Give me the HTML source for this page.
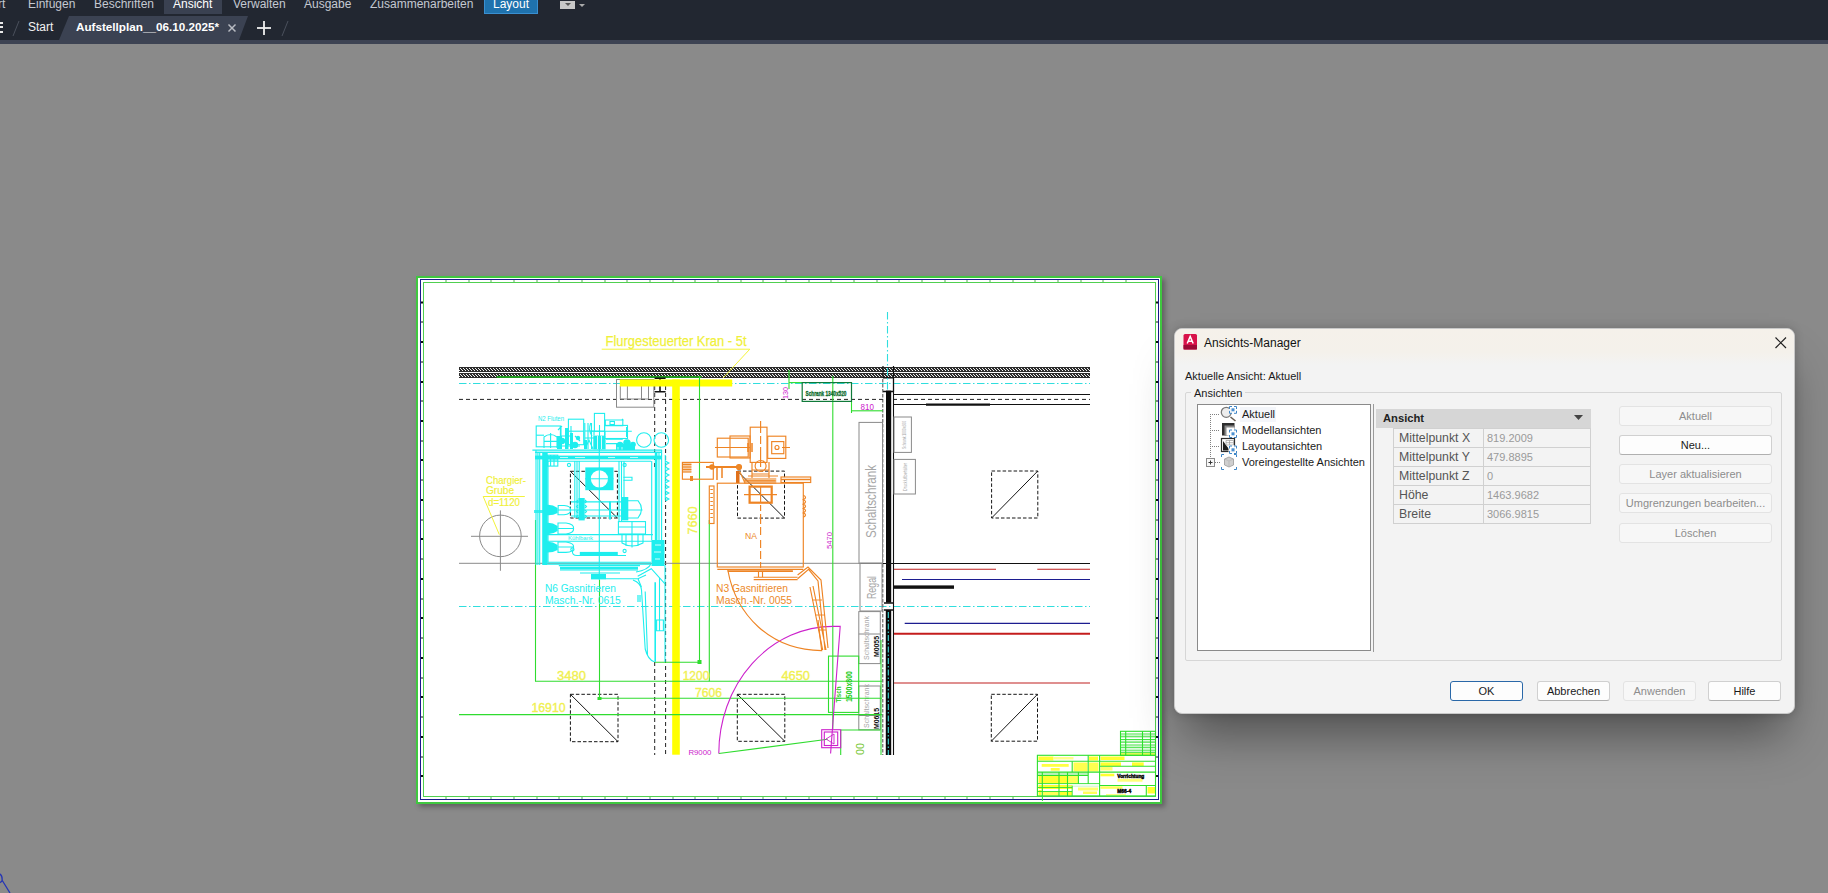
<!DOCTYPE html>
<html><head><meta charset="utf-8">
<style>
*{margin:0;padding:0;box-sizing:border-box}
html,body{width:1828px;height:893px;overflow:hidden;background:#8a8a8a;font-family:"Liberation Sans",sans-serif;position:relative}
.abs{position:absolute}
#top{position:absolute;left:0;top:0;width:1828px;height:44px;background:#222731}
#strip{position:absolute;left:0;top:40px;width:1828px;height:4px;background:#3d4353}
.mt{position:absolute;top:-3px;font-size:12px;color:#c5c9d1;white-space:nowrap;line-height:14px}
#dlg{position:absolute;left:1174px;top:328px;width:621px;height:386px;background:#f3f3f3;border-radius:8px;box-shadow:0 30px 45px -10px rgba(0,0,0,0.42),0 0 10px rgba(0,0,0,0.18);border:1px solid #c8c8c8;overflow:hidden}
.dt{position:absolute;font-size:11px;color:#1a1a1a;white-space:nowrap;line-height:14px}
.btn{position:absolute;height:20px;border:1px solid #e3e3e3;background:#f7f7f7;border-radius:3px;font-size:11px;color:#8d8d8d;text-align:center;line-height:18px;white-space:nowrap}
.btn.en{background:#fdfdfd;border-color:#d0d0d0;border-bottom-color:#b0b0b0;color:#1a1a1a}
</style></head><body>
<div id="top">
  <div class="mt" style="left:-2px">rt</div>
  <div class="mt" style="left:28px">Einfügen</div>
  <div class="mt" style="left:94px">Beschriften</div>
  <div class="abs" style="left:164px;top:0;width:58px;height:14px;background:#3a4151"></div>
  <div class="mt" style="left:173px;color:#fff">Ansicht</div>
  <div class="mt" style="left:233px">Verwalten</div>
  <div class="mt" style="left:304px">Ausgabe</div>
  <div class="mt" style="left:370px">Zusammenarbeiten</div>
  <div class="abs" style="left:484px;top:0;width:54px;height:14px;background:#1f72ad;border:1px solid #3a8fd0;border-top:none"></div>
  <div class="mt" style="left:493px;color:#fff">Layout</div>
  <div class="abs" style="left:560px;top:1px;width:15px;height:8px;background:#c8c8c8"></div>
  <div class="abs" style="left:565px;top:3px;width:0;height:0;border-left:3px solid transparent;border-right:3px solid transparent;border-top:3px solid #555"></div>
  <div class="abs" style="left:579px;top:4px;width:0;height:0;border-left:3px solid transparent;border-right:3px solid transparent;border-top:3px solid #aaa"></div>
  <!-- doc tabs row -->
  <svg class="abs" style="left:0;top:0" width="1828" height="44">
    <polygon points="59,40 69,16 248,16 239,40" fill="#3b4252"/>
    <line x1="13" y1="36" x2="19" y2="21" stroke="#4a505c" stroke-width="1"/>
    <line x1="282" y1="36" x2="288" y2="21" stroke="#4a505c" stroke-width="1"/>
    <rect x="0" y="22" width="3" height="2" fill="#e8e8e8"/>
    <rect x="0" y="26" width="3" height="2" fill="#e8e8e8"/>
    <rect x="0" y="31" width="3" height="2" fill="#e8e8e8"/>
    <line x1="228.5" y1="24.5" x2="235.5" y2="31.5" stroke="#b9bcc3" stroke-width="1.5"/>
    <line x1="235.5" y1="24.5" x2="228.5" y2="31.5" stroke="#b9bcc3" stroke-width="1.5"/>
    <line x1="257" y1="28" x2="271" y2="28" stroke="#f0f0f0" stroke-width="1.8"/>
    <line x1="264" y1="21" x2="264" y2="35" stroke="#f0f0f0" stroke-width="1.8"/>
  </svg>
  <div class="mt" style="left:28px;top:20px;color:#f2f2f2">Start</div>
  <div class="mt" style="left:76px;top:20px;color:#fff;font-weight:bold;font-size:11.7px">Aufstellplan__06.10.2025*</div>
</div>
<div id="strip"></div>

<svg class="abs" style="left:0;top:860px" width="20" height="33"><path d="M-3 13 Q3 14 2 21 Q-1 24 -4 22 M2 20 L10 33" stroke="#2535b5" stroke-width="1.3" fill="none"/></svg>
<!-- PAPER -->
<div class="abs" style="left:416px;top:276px;width:746px;height:528px;background:#fff;border:2px solid #3fc83f;box-shadow:3px 3px 5px rgba(0,0,0,0.3)"></div>
<div class="abs" style="left:420px;top:279px;width:739px;height:521px;border:1px solid #1a1a8c"></div>
<div class="abs" style="left:423px;top:282px;width:733px;height:515px;border:1px solid #50d050"></div>

<!-- DRAWING START -->
<svg class="abs" style="left:0;top:0" width="1828" height="893" viewBox="0 0 1828 893">
<defs>
<pattern id="hatch" x="0" y="367" width="6" height="6" patternUnits="userSpaceOnUse">
<rect width="6" height="6" fill="#2c2c2c"/>
<g fill="#f2f2f2" shape-rendering="crispEdges">
<rect x="1" y="1" width="1" height="1"/><rect x="2" y="2" width="1" height="1"/><rect x="3" y="3" width="1" height="1"/>
<rect x="4" y="1" width="1" height="1"/><rect x="5" y="2" width="1" height="1"/><rect x="0" y="3" width="1" height="1"/>
</g>
</pattern>
</defs>
<g shape-rendering="auto">
<!-- paper border ticks -->
<g stroke="#111" stroke-width="1">
<path d="M421 302.5h2 M421 342h2 M421 382h2 M421 421h2 M421 460h2 M421 500h2 M421 539h2 M421 579h2 M421 618h2 M421 658h2 M421 697h2 M421 737h2 M421 776h2" stroke-width="2"/>
<path d="M421 322h2 M421 362h2 M421 401h2 M421 441h2 M421 480h2 M421 520h2 M421 559h2 M421 599h2 M421 638h2 M421 678h2 M421 717h2 M421 757h2"/>
<path d="M1156 302.5h2 M1156 342h2 M1156 382h2 M1156 421h2 M1156 460h2 M1156 500h2 M1156 539h2 M1156 579h2 M1156 618h2 M1156 658h2 M1156 697h2 M1156 737h2 M1156 776h2" stroke-width="2"/>
<path d="M1156 322h2 M1156 362h2 M1156 401h2 M1156 441h2 M1156 480h2 M1156 520h2 M1156 559h2 M1156 599h2 M1156 638h2 M1156 678h2 M1156 717h2 M1156 757h2"/>
</g>
<g stroke="#2a9a2a" stroke-width="0.8">
<path d="M446 280v2 M469 280v2 M491 280v2 M514 280v2 M537 280v2 M559 280v2 M582 280v2 M605 280v2 M627 280v2 M650 280v2 M673 280v2 M695 280v2 M718 280v2 M741 280v2 M763 280v2 M786 280v2 M809 280v2 M831 280v2 M854 280v2 M877 280v2 M899 280v2 M922 280v2 M945 280v2 M967 280v2 M990 280v2 M1013 280v2 M1035 280v2 M1058 280v2 M1081 280v2 M1103 280v2 M1126 280v2"/>
<path d="M446 797v2 M469 797v2 M491 797v2 M514 797v2 M537 797v2 M559 797v2 M582 797v2 M605 797v2 M627 797v2 M650 797v2 M673 797v2 M695 797v2 M718 797v2 M741 797v2 M763 797v2 M786 797v2 M809 797v2 M831 797v2 M854 797v2 M877 797v2 M899 797v2 M922 797v2 M945 797v2 M967 797v2 M990 797v2 M1013 797v2"/>
</g>

<!-- wall hatch -->
<rect x="459" y="367" width="631" height="5" fill="url(#hatch)" shape-rendering="crispEdges"/>
<rect x="459" y="373" width="631" height="5" fill="url(#hatch)" shape-rendering="crispEdges"/>
<rect x="496.6" y="376" width="205" height="2" fill="#1f9a1f"/>
<path d="M883 366v12 M893.5 366v26" stroke="#111" stroke-width="1.2"/>
<path d="M883 377.8h10.5 M883 391.5h10.5" stroke="#111" stroke-width="1.3"/>

<!-- cyan dash-dot lines -->
<g stroke="#30dede" stroke-width="1.1" stroke-dasharray="7.5,2.5,1.5,2.5" fill="none">
<line x1="459" y1="383.5" x2="1090" y2="383.5"/>
<line x1="459" y1="606.5" x2="1090" y2="606.5"/>
<line x1="887.5" y1="312" x2="887.5" y2="390"/>
</g>

<!-- black dashed lines -->
<g stroke="#222" stroke-width="1" stroke-dasharray="4,3" fill="none">
<line x1="459" y1="399.4" x2="1090" y2="399.4"/>
<line x1="654.7" y1="386" x2="654.7" y2="470"/>
<line x1="654.7" y1="662" x2="654.7" y2="755"/>
<line x1="665.6" y1="386" x2="665.6" y2="755"/>
<line x1="882.8" y1="379" x2="882.8" y2="755" stroke="#3a3a3a" stroke-width="0.9" stroke-dasharray="3.5,1.5"/>
</g>

<!-- gray box near crane -->
<g stroke="#8a8a8a" stroke-width="1" fill="none">
<rect x="616.5" y="379.5" width="37.3" height="27.7"/>
<path d="M620.3 386v13 M627.4 386v13 M641.5 386v13 M648.5 386v13 M620.3 399h28"/>
</g>
<path d="M654.6 378.3h11 M660 378.3v13.5 M654.6 391.8h11" stroke="#111" stroke-width="1.6" fill="none"/>

<!-- crane label -->
<text x="605.5" y="346.4" font-family="Liberation Sans" font-size="15" fill="#f0f038" stroke="#f0f038" stroke-width="0.25" textLength="141" lengthAdjust="spacingAndGlyphs">Flurgesteuerter Kran - 5t</text>
<path d="M601.7 349.2H749.8L723 378" stroke="#f4f43a" stroke-width="1" fill="none"/>

<!-- yellow T -->
<rect x="619.8" y="379.5" width="112.4" height="7" fill="#ffff00"/>
<rect x="672.2" y="379.5" width="7.6" height="375.2" fill="#ffff00"/>
</g>
</svg>
<svg class="abs" style="left:0;top:0" width="1828" height="893" viewBox="0 0 1828 893">
<!-- wall -->
<rect x="886" y="390.6" width="5.2" height="212" fill="#0a0a0a"/>
<rect x="885.8" y="610" width="5.4" height="145" fill="#0a0a0a"/>
<line x1="888.3" y1="612" x2="888.3" y2="755" stroke="#40dede" stroke-width="1.1" stroke-dasharray="6,2,1.5,2"/>
<path d="M884 603h9 M884 610h9" stroke="#111" stroke-width="1.5"/>
<line x1="893.5" y1="377" x2="893.5" y2="755" stroke="#111" stroke-width="1.1"/>
<!-- right black lines -->
<g stroke="#111" fill="none">
<line x1="893.5" y1="394.5" x2="1090" y2="394.5" stroke-width="1.2"/>
<line x1="893.5" y1="404.5" x2="1090" y2="404.5" stroke-width="1.1"/>
<line x1="926" y1="404.6" x2="990" y2="404.6" stroke-width="2.2"/>
<line x1="860" y1="563.5" x2="1090" y2="563.5" stroke-width="1.2"/>
<rect x="894" y="585.4" width="60" height="3.4" fill="#111" stroke="none"/>
</g>
<!-- red / blue -->
<g fill="none">
<path d="M893.9 569.2H996 M1037.3 569.2H1090" stroke="#c02020" stroke-width="1.1"/>
<path d="M902 579.5H1090" stroke="#1c1c90" stroke-width="1.1"/>
<path d="M904.7 623.4H1090" stroke="#1c1c90" stroke-width="1.1"/>
<path d="M894 633.8H1090" stroke="#c41c1c" stroke-width="2"/>
<path d="M894 683H1090" stroke="#c02020" stroke-width="1.1"/>
</g>
<!-- dashed squares -->
<g stroke="#151515" stroke-width="1" fill="none">
<rect x="570.4" y="471.3" width="47" height="46.7" stroke-dasharray="3.5,2"/>
<line x1="570.4" y1="471.3" x2="617.4" y2="518"/>
<rect x="737.5" y="471.1" width="47" height="47" stroke-dasharray="3.5,2"/>
<line x1="737.5" y1="471.1" x2="784.5" y2="518.1"/>
<rect x="991.6" y="471" width="46.2" height="47" stroke-dasharray="3.5,2"/>
<line x1="991.6" y1="518" x2="1037.8" y2="471"/>
<rect x="570.4" y="694.3" width="47.6" height="47.4" stroke-dasharray="3.5,2"/>
<line x1="570.4" y1="694.3" x2="618" y2="741.7"/>
<rect x="737.3" y="694.3" width="47.5" height="47" stroke-dasharray="3.5,2"/>
<line x1="737.3" y1="694.3" x2="784.8" y2="741.3"/>
<rect x="991.3" y="694.3" width="46.2" height="46.9" stroke-dasharray="3.5,2"/>
<line x1="991.3" y1="741.2" x2="1037.5" y2="694.3"/>
</g>
<!-- gray lines & circle -->
<g stroke="#8a8a8a" stroke-width="1" fill="none">
<line x1="459" y1="563.3" x2="860" y2="563.3"/>
<circle cx="500.4" cy="535.9" r="20.8"/>
<line x1="471" y1="536.3" x2="528" y2="536.3"/>
<line x1="500.4" y1="510.4" x2="500.4" y2="570.8"/>
<rect x="859" y="422.4" width="23.5" height="141"/>
<rect x="860" y="563" width="22" height="48"/>
<rect x="858.8" y="611.6" width="21.5" height="52"/>
<line x1="858.8" y1="634" x2="880.3" y2="634"/>
<rect x="858.8" y="686" width="21.5" height="43.8"/>
<line x1="858.8" y1="715.5" x2="880.3" y2="715.5"/>
<rect x="894" y="417" width="17.4" height="35.4"/>
<rect x="894" y="459.4" width="21.4" height="34.6"/>
</g>
<g font-family="Liberation Sans" fill="#a6a6a6">
<text transform="translate(875.5,538) rotate(-90)" font-size="14" textLength="73" lengthAdjust="spacingAndGlyphs">Schaltschrank</text>
<text transform="translate(875.5,599) rotate(-90)" font-size="13" textLength="23" lengthAdjust="spacingAndGlyphs">Regal</text>
<text transform="translate(868.5,660) rotate(-90)" font-size="8" textLength="44" lengthAdjust="spacingAndGlyphs">Schaltschrank</text>
<text transform="translate(868.5,728) rotate(-90)" font-size="8" textLength="44" lengthAdjust="spacingAndGlyphs">Schaltschrank</text>
<text transform="translate(906,449) rotate(-90)" font-size="4.5" textLength="28" lengthAdjust="spacingAndGlyphs">Schrank 1000x600</text>
<text transform="translate(907,491) rotate(-90)" font-size="4.5" textLength="28" lengthAdjust="spacingAndGlyphs">Druckluftbehälter</text>
</g>
<g font-family="Liberation Sans" fill="#111" font-weight="bold">
<text transform="translate(879,657) rotate(-90)" font-size="7" textLength="21" lengthAdjust="spacingAndGlyphs">M0055</text>
<text transform="translate(879,729) rotate(-90)" font-size="7" textLength="21" lengthAdjust="spacingAndGlyphs">M0615</text>
</g>
<!-- Chargier-Grube -->
<g font-family="Liberation Sans" fill="#f0f03a" stroke="#f0f03a" stroke-width="0.2" font-size="11">
<text x="486" y="484.2" textLength="40" lengthAdjust="spacingAndGlyphs">Chargier-</text>
<text x="486" y="494.3" textLength="28" lengthAdjust="spacingAndGlyphs">Grube</text>
<text x="488" y="506.3" textLength="32" lengthAdjust="spacingAndGlyphs">d=1120</text>
</g>
<path d="M524.8 496.5H483.2L499.3 534.6" stroke="#f2f23a" stroke-width="1" fill="none"/>

<!-- green dims -->
<g stroke="#2fdc2f" stroke-width="1.1" fill="none">
<line x1="535.5" y1="520" x2="535.5" y2="681.3"/>
<line x1="599.5" y1="580" x2="599.5" y2="698.8"/>
<line x1="535" y1="681.3" x2="882" y2="681.3"/>
<line x1="599.5" y1="698.3" x2="882" y2="698.3"/>
<line x1="459" y1="714.6" x2="882" y2="714.6"/>
<line x1="699.5" y1="376" x2="699.5" y2="662.3"/>
<line x1="654.7" y1="662.3" x2="699.8" y2="662.3"/>
<line x1="709.3" y1="520" x2="709.3" y2="681.3"/>
<line x1="832.8" y1="376" x2="832.8" y2="729"/>
<line x1="881" y1="640" x2="881" y2="755"/>
<line x1="718.8" y1="753.5" x2="827.6" y2="739.3"/>
<line x1="840.7" y1="730" x2="880" y2="730"/>
<line x1="840.7" y1="730" x2="840.7" y2="755"/>
<line x1="789" y1="370" x2="789" y2="389"/>
<line x1="789" y1="382.6" x2="802" y2="382.6"/>
<line x1="851.5" y1="410.8" x2="882.8" y2="410.8"/>
<line x1="851.5" y1="401" x2="851.5" y2="413"/>
<rect x="828.5" y="656.1" width="30.2" height="56.3"/>
</g>
<g fill="#2fdc2f">
<rect x="697.5" y="660" width="4" height="4"/>
<rect x="597.5" y="697" width="4" height="3"/>
</g>
<rect x="802.2" y="382.6" width="49.3" height="18.8" fill="none" stroke="#107a3a" stroke-width="1.2"/>
<text x="805.5" y="395.5" font-family="Liberation Sans" font-size="8" font-weight="bold" fill="#0c6a2c" stroke="#0c6a2c" stroke-width="0.35" textLength="41" lengthAdjust="spacingAndGlyphs">Schrank 1340x520</text>
<g font-family="Liberation Sans" font-weight="bold" fill="#22cc22">
<text transform="translate(852,702) rotate(-90)" font-size="8.5" textLength="31" lengthAdjust="spacingAndGlyphs">1500x800</text>
<text transform="translate(840.5,702.6) rotate(-90)" font-size="7.5" textLength="16" lengthAdjust="spacingAndGlyphs">Tisch</text>
</g>
<text transform="translate(864,755) rotate(-90)" font-family="Liberation Sans" font-size="10" fill="#7ac83a" textLength="12" lengthAdjust="spacingAndGlyphs">00</text>

<!-- yellow dims text -->
<g font-family="Liberation Sans" fill="#f0f050" stroke="#f0f050" stroke-width="0.35" font-size="12.5">
<text x="557" y="680.4" textLength="29" lengthAdjust="spacingAndGlyphs">3480</text>
<text x="531.4" y="711.8" textLength="34.3" lengthAdjust="spacingAndGlyphs">16910</text>
<text x="682.7" y="680.4" textLength="26.6" lengthAdjust="spacingAndGlyphs">1200</text>
<text x="695" y="696.6" textLength="27" lengthAdjust="spacingAndGlyphs">7606</text>
<text x="781.4" y="679.6" textLength="28.6" lengthAdjust="spacingAndGlyphs">4650</text>
<text transform="translate(697,534.4) rotate(-90)" textLength="28" lengthAdjust="spacingAndGlyphs">7660</text>
</g>

<!-- magenta -->
<g stroke="#cc22cc" stroke-width="1.1" fill="none">
<path d="M832.7 626.4 A 114 127 0 0 0 718.8 753.5"/>
<path d="M832.7 626.4H840.2L830.6 753.5"/>
<rect x="821.7" y="729.7" width="19" height="18"/>
<rect x="824.3" y="732" width="13.4" height="13.5"/>
<path d="M826 739 L834 734 M826 739 L834 744 M834 734V744" stroke-width="0.9"/>
</g>
<g font-family="Liberation Sans" fill="#cc22cc">
<text transform="translate(832,549) rotate(-90)" font-size="8" textLength="17" lengthAdjust="spacingAndGlyphs">5470</text>
<text transform="translate(788,399) rotate(-90)" font-size="8" textLength="12" lengthAdjust="spacingAndGlyphs">130</text>
<text x="860.6" y="410.4" font-size="8.5" textLength="13.4" lengthAdjust="spacingAndGlyphs">810</text>
<text x="688.4" y="755" font-size="7" textLength="23" lengthAdjust="spacingAndGlyphs">R9000</text>
</g>
</svg>
<svg class="abs" style="left:0;top:0" width="1828" height="893" viewBox="0 0 1828 893">
<g stroke="#1eeeee" fill="none" stroke-width="1.1">
<text x="538" y="421.3" font-family="Liberation Sans" font-size="7.5" fill="#1eeeee" stroke="none" textLength="26" lengthAdjust="spacingAndGlyphs">N2 Fluten</text>
<!-- Box A -->
<rect x="536.2" y="426" width="24.2" height="20.8"/>
<path d="M536.2 435.2H544"/>
<path d="M544 448V437 Q550.5 432 557 437V448 M550.6 433v15 M544 441.4H557"/>
<!-- dense cluster between A and B -->
<g fill="#1eeeee" stroke="none">
<rect x="557" y="436" width="5" height="13"/>
<rect x="565" y="428" width="3.5" height="21"/>
<rect x="570" y="433" width="3" height="16"/>
<circle cx="562" cy="441" r="3.2"/>
<circle cx="575" cy="445" r="3.2"/>
<circle cx="578" cy="438" r="2.2"/>
<rect x="584" y="440" width="3" height="9"/>
</g>
<path d="M558 430l4-4 M560 436h11 M557 446h23 M571 426v23 M561 426v10 M575 436l5 5"/>
<!-- Box B -->
<rect x="568.4" y="419.2" width="15.3" height="25.5"/>
<path d="M568.4 431.2H583.7"/>
<path d="M584.8 423V449 M588 423V449 M591.5 423V449 M584.8 431H595 M584.8 438H595"/>
<path d="M585 449 L589 440 L593 449"/>
<!-- Box C -->
<rect x="594.4" y="413.4" width="10.2" height="17.8"/>
<rect x="593.3" y="435.6" width="12.3" height="13.8" fill="#1eeeee" stroke="none"/>
<path d="M597.5 436v13 M601.5 436v13" stroke="#fff" stroke-width="0.8"/>
<path d="M599.5 425v25"/>
<path d="M594 431.2v4.4 M605 431.2v4.4"/>
<!-- cylinder -->
<rect x="604.6" y="425.4" width="22.9" height="13.1"/>
<path d="M605.3 420H622.8V425.7H605.3Z M610 421.5h4.4v3h-4.4z M622 419l1.5 1.5"/>
<path d="M590 431.2H631.8 M606 439.2H622.8 M606 443.6H622.8 M590.7 423 Q588 430 592 436"/>
<rect x="626" y="427" width="2" height="10" fill="#1eeeee" stroke="none"/>
<!-- bolts -->
<g fill="#1eeeee" stroke="none">
<circle cx="620" cy="445" r="3.2"/>
<circle cx="627" cy="443" r="3.8"/>
<circle cx="633" cy="444.5" r="2.8"/>
<rect x="616" y="444" width="19" height="6"/>
</g>
<path d="M618 447v4 M622 447v4" stroke="#fff" stroke-width="0.7"/>
<circle cx="643.9" cy="440" r="7.3"/>
<circle cx="661.3" cy="440" r="7.3"/>
<!-- frame top band -->
<path d="M532.4 450.1H662 M548 461.2H651"/>
<rect x="535" y="451.6" width="127" height="1.4" fill="#1eeeee" stroke="none"/>
<rect x="535" y="455.6" width="127" height="3.8" fill="#1eeeee" stroke="none"/>
<path d="M560 457.5h8 M575 457.5h10 M630 457.5h8 M608 457.5h7" stroke="#fff" stroke-width="0.7"/>
<!-- left band -->
<path d="M536 450v115 M537.9 453v112 M539.7 453v112 M548 461v101.5"/>
<rect x="542.2" y="453" width="5.5" height="112" fill="#1eeeee" stroke="none"/>
<rect x="547.6" y="455.2" width="10.2" height="10.9"/>
<path d="M550.6 455v11 M554 455v11 M547.6 460H557.8"/>
<!-- right band -->
<path d="M651.7 461v79 M659 453v87 M661.6 450v90"/>
<rect x="654.8" y="453" width="2.6" height="87" fill="#1eeeee" stroke="none"/>
<rect x="651.5" y="540" width="13" height="26" fill="#1eeeee" stroke="none"/>
<path d="M655 545h6 M654 552h7 M655 559h5" stroke="#fff" stroke-width="0.8"/>
<path d="M665.3 461l3.5 2-3.5 2 M665.3 467l3.5 2-3.5 2 M665.3 473l3.5 2-3.5 2 M665.3 479l3.5 2-3.5 2 M665.3 485l3.5 2-3.5 2 M665.3 491l3.5 2-3.5 2 M665.3 497l3.5 2-3.5 2" stroke-width="1.2"/>
<path d="M665.3 455V500"/>
<!-- bottom -->
<path d="M547.7 562.3H651 M547.7 564.1H651"/>
<path d="M558.8 565.6H640 M560 570H638"/>
<rect x="560" y="566.8" width="78" height="2.6" fill="#1eeeee" stroke="none"/>
<rect x="591" y="574" width="15" height="5.4" fill="#1eeeee" stroke="none"/>
<path d="M580 573H620"/>
<!-- inner verticals -->
<path d="M574.8 461v57 M577 461v57 M579.2 461v40 M619 461v60.6 M621.5 461v60.6 M624 461v36 M599.3 440v140"/>
<path d="M623.4 477.3H632V480.3H623.4"/>
<circle cx="569" cy="465" r="1.6"/>
<circle cx="624.6" cy="465" r="1.6"/>
<!-- square with circle -->
<rect x="585.3" y="467.4" width="28.2" height="22.8" fill="#1eeeee" stroke="none"/>
<circle cx="599.4" cy="478.8" r="8.6" fill="#fff" stroke="none"/>
<path d="M585 478.8H613.5 M599.3 467.4v22.8" stroke-width="1"/>
<!-- horizontal cylinder lower -->
<path d="M571 501.9H628 M571 510H642.5 M571 516H628 M628 500.7H638 Q645 509 638 518H628"/>
<path d="M610 501.5v18" stroke-width="2"/>
<rect x="578.5" y="498" width="6.2" height="22.4" fill="#1eeeee" stroke="none"/>
<path d="M578 500l-1.5 1.5 1.5 1.5 M578 505l-1.5 1.5 1.5 1.5 M578 510l-1.5 1.5 1.5 1.5 M578 515l-1.5 1.5 1.5 1.5 M585 500l1.5 1.5-1.5 1.5 M585 505l1.5 1.5-1.5 1.5 M585 510l1.5 1.5-1.5 1.5 M585 515l1.5 1.5-1.5 1.5"/>
<rect x="621.5" y="497" width="6.8" height="23.4" fill="#1eeeee" stroke="none"/>
<!-- nozzles left -->
<g fill="#1eeeee" stroke="none">
<path d="M545.3 505 Q552 504 557.6 508 L557.6 513 Q552 516 545.3 515Z"/>
<path d="M545.3 523 Q552 522 557.6 526 L557.6 531 Q552 535 545.3 534Z"/>
<path d="M545.3 542 Q552 541 557.6 545 L557.6 550 Q552 553 545.3 552.4Z"/>
<rect x="534" y="510" width="10" height="3" opacity="0.8"/>
</g>
<path d="M558.2 505.5h6 Q571 506 570.5 510 Q571 514 564 514.8h-6z M558.2 510H570"/>
<path d="M558 523h8 Q574 524 573.6 528.5 Q574 533 566 534h-8z M558 528.5H573"/>
<path d="M558 542h8 Q574 543 573.6 547 Q574 552 566 552.4h-8z M558 547H573"/>
<!-- kuehlbank -->
<path d="M545.9 534.6H653 M545.9 541.3H653"/>
<text x="568" y="540" font-family="Liberation Sans" font-size="5.5" fill="#1eeeee" stroke="none" textLength="25" lengthAdjust="spacingAndGlyphs">Kühlbank</text>
<!-- lower right box -->
<rect x="618.4" y="521.6" width="27.1" height="12.4"/>
<path d="M618.4 527H645.5 M622 534V543 Q632 549 643 543V534 M632 521.6v26 M626 534v12 M638 534v12"/>
<!-- lower small bar -->
<path d="M572.4 550.6Q572 555.5 577 555.5H626"/>
<circle cx="572.4" cy="549.5" r="1.6"/>
<circle cx="624.6" cy="551" r="1.6"/>
<rect x="579.8" y="551.9" width="38" height="3.6" fill="#1eeeee" stroke="none"/>
<!-- right side duct -->
<path d="M637.7 576.3 L651.3 568.7 L665 583.8 M633 580 Q641 583 641.5 590 L645.2 649 Q648 660 654.3 661.7 M645.2 591.4 L647.5 655 M659.5 577.8V630.7 M656.6 620v10.7h6.8V620z M636 572 Q648 570 651 564"/>
<path d="M655.2 582.3V661.7" stroke-width="1.6"/>
<path d="M638 595v7 M640 595v7" stroke-width="1.2"/>
<path d="M665 565V662"/>
<path d="M606 578.7H638 L646 575 M638 578.7 L641.4 587"/>
<!-- N6 text -->
<text x="544.9" y="591.5" font-family="Liberation Sans" font-size="10.5" fill="#1eeeee" stroke="none" textLength="71" lengthAdjust="spacingAndGlyphs">N6 Gasnitrieren</text>
<text x="544.9" y="603.6" font-family="Liberation Sans" font-size="10.5" fill="#1eeeee" stroke="none" textLength="76" lengthAdjust="spacingAndGlyphs">Masch.-Nr. 0615</text>
</g>
</svg>
<svg class="abs" style="left:0;top:0" width="1828" height="893" viewBox="0 0 1828 893">
<g stroke="#ee8424" fill="none" stroke-width="1.15">
<path d="M760.6 421v12 M760.6 436v8 M760.6 447v20 M760.6 505v6 M760.6 514v10 M760.6 527v8 M760.6 540v8 M760.6 551v8 M760.6 562v6"/>
<rect x="750.2" y="427.2" width="16.8" height="35.2"/>
<rect x="717.3" y="438.2" width="30.9" height="18.8"/>
<rect x="730" y="436" width="20" height="22"/>
<path d="M715 447.5H750 M715 447.5h8 M790 447.5h-8"/>
<rect x="767.7" y="436.2" width="18.1" height="22.2"/>
<rect x="771.7" y="441.6" width="12.1" height="12.1"/>
<circle cx="777" cy="447.5" r="2"/>
<path d="M748 443v9 M752 443v9" stroke-width="1.5"/>
<!-- left arm -->
<rect x="682.4" y="462.4" width="30.9" height="16.8"/>
<path d="M682.4 464.5h9 M682.4 467h9 M682.4 469.5h9 M682.4 472h9" stroke-width="1"/>
<rect x="682.4" y="462.4" width="9" height="10" fill="#ec8a2a" opacity="0.45" stroke="none"/>
<path d="M706 467.1H741" stroke-width="2"/>
<circle cx="712" cy="467" r="2.2" fill="#ec8a2a"/>
<circle cx="739" cy="467" r="2.5" fill="#ec8a2a"/>
<path d="M717 468v12 M722 468v10" stroke-width="1.5"/>
<rect x="690" y="476" width="3" height="5" fill="#ec8a2a" stroke="none"/>
<!-- neck -->
<circle cx="760.6" cy="466" r="5.5"/>
<path d="M752 462v16 M769 462v16 M752 470H769 M752 474H769 M748 476H778"/>
<!-- flange -->
<rect x="744.5" y="478.5" width="31.2" height="4.7" fill="#ec8a2a" opacity="0.55"/>
<path d="M744.5 480.8H775.7"/>
<rect x="736" y="471" width="3.5" height="12" fill="#e0701a" stroke="none"/>
<path d="M739.5 471 L745 483" stroke="#ec8a2a"/>
<rect x="781" y="477" width="29.7" height="5.5"/>
<path d="M781 479.5H810.7" stroke-width="1.5"/>
<!-- chamber -->
<rect x="717.3" y="483.2" width="86" height="83.8"/>
<path d="M717.3 569.4H803.3"/>
<rect x="749.6" y="486.6" width="22.1" height="16.1" stroke-width="2.2"/>
<path d="M744 494.6H777 M760.6 486.6v16.1"/>
<rect x="709.3" y="486" width="4.7" height="37.5"/>
<path d="M711.6 489v1 M711.6 493v1 M711.6 497v1 M711.6 501v1 M711.6 505v1 M711.6 509v1 M711.6 513v1 M711.6 517v1" stroke-width="2.5"/>
<path d="M803.3 495.3 q4.5 2 0 4.4 q4.5 2 0 4.4 q4.5 2 0 4.4 q4.5 2 0 4.4 q4.5 2 0 4.4"/>
<text x="745" y="538.8" font-family="Liberation Sans" font-size="9" fill="#ec8a2a" stroke="none" textLength="12" lengthAdjust="spacingAndGlyphs">NA</text>
<!-- base -->
<path d="M727.8 569.9H792.9 M727.8 571.4H792.9"/>
<path d="M753.7 577.2H797.6 M753.7 579.6H797.6 M758.5 571.4v6 M762.5 571.4v6"/>
<path d="M797.6 578.8 L808.6 569.4 L818 581 L825 650 M797.6 575 L808 567 L821 580 L828 648 M810 587 L822.7 650 M813 586 L826 650"/>
<path d="M812 600h10 M815 615h10 M818 630h8" stroke-width="0.9"/>
<path d="M727.8 570 C 736 615, 770 650, 821.7 650.6 L 818 620"/>
<text x="716" y="592.1" font-family="Liberation Sans" font-size="11" fill="#ec8a2a" stroke="none" textLength="72" lengthAdjust="spacingAndGlyphs">N3 Gasnitrieren</text>
<text x="716" y="603.9" font-family="Liberation Sans" font-size="11" fill="#ec8a2a" stroke="none" textLength="76" lengthAdjust="spacingAndGlyphs">Masch.-Nr. 0055</text>
</g>
</svg>
<svg class="abs" style="left:0;top:0" width="1828" height="893" viewBox="0 0 1828 893">
<!-- revision table fills -->
<g fill="#c8f5c8">
<rect x="1121" y="735" width="34" height="1.8"/><rect x="1121" y="740.5" width="34" height="1.8"/><rect x="1121" y="745.8" width="34" height="1.8"/><rect x="1121" y="751" width="34" height="1.8"/>
</g>
<g fill="#ffff30">
<rect x="1121" y="753" width="34" height="2.3" opacity="0.8"/>
<!-- main block texts -->
<rect x="1038.4" y="756.5" width="15" height="4"/>
<rect x="1053.5" y="757" width="20" height="2.5" opacity="0.55"/>
<rect x="1089" y="756.5" width="9" height="4"/>
<rect x="1100.5" y="756.5" width="24" height="3.5"/>
<rect x="1041.7" y="764" width="27" height="2.8" opacity="0.9"/>
<rect x="1050.7" y="768" width="9" height="2.7" opacity="0.9"/>
<rect x="1073.5" y="762.5" width="14" height="9" opacity="0.85"/>
<rect x="1089" y="762.5" width="9.5" height="9" opacity="0.85"/>
<rect x="1100.5" y="762.4" width="20.5" height="3.8"/>
<rect x="1132" y="762.4" width="11.7" height="3.8"/>
<rect x="1100.5" y="767" width="12" height="3.5" opacity="0.7"/>
<rect x="1038.5" y="776" width="29" height="7.5"/>
<rect x="1067.5" y="776" width="10.5" height="7.5" opacity="0.8"/>
<rect x="1038.5" y="785" width="34" height="4"/>
<rect x="1038.5" y="790" width="3" height="5.5"/>
<rect x="1042.5" y="792" width="17" height="3.5" opacity="0.8"/>
<rect x="1060" y="791.5" width="12" height="4"/>
<rect x="1078" y="787.5" width="20" height="3" opacity="0.7"/>
<rect x="1083" y="791.5" width="14" height="2.5" opacity="0.8"/>
<rect x="1100.5" y="773.7" width="13.8" height="2.6"/>
<rect x="1117.5" y="778.8" width="25" height="2.9" opacity="0.65"/>
<rect x="1100.5" y="786.3" width="22" height="2.5" opacity="0.8"/>
<rect x="1147.5" y="787" width="7.5" height="6.5"/>
<rect x="1106" y="794" width="20" height="1.5" opacity="0.6"/>
</g>
<g fill="#b8f0b8">
<rect x="1038" y="772.5" width="50" height="2.8"/>
<rect x="1067.5" y="785.5" width="31" height="1.5" opacity="0.5"/>
</g>
<g stroke="#2ee02e" fill="none" stroke-width="1.1">
<rect x="1120.5" y="731.3" width="35" height="24"/>
<path d="M1120.5 734H1155.5 M1120.5 736.8H1155.5 M1120.5 739.5H1155.5 M1120.5 742.2H1155.5 M1120.5 745H1155.5 M1120.5 747.7H1155.5 M1120.5 750.2H1155.5 M1120.5 752.7H1155.5" stroke-width="0.9"/>
<path d="M1125.7 731.3v24 M1142.5 731.3v24 M1150.5 731.3v24"/>
<rect x="1037.4" y="755.3" width="118.1" height="40.6"/>
<path d="M1037.4 761.2H1155.5 M1037.4 772.1H1155.5 M1099.6 766.2H1155.5 M1037.4 775.5H1088 M1099.6 785.5H1155.5"/>
<path d="M1088.2 755.3v17 M1099.6 755.3v40.6 M1072.2 761.2v11 M1042.3 772.1v23.8 M1059 772.1v23.8 M1067.5 772.1v23.8 M1078.4 772.1v12 M1088.2 772.1v12 M1146.3 785.5v10.4"/>
<path d="M1037.4 783.6H1099.6 M1037.4 787.5H1072.2 M1037.4 791.5H1072.2 M1072.2 785.8V795.9" stroke-width="0.9"/>
</g>
<g font-family="Liberation Sans" font-weight="bold" fill="#0a0a0a">
<text x="1117.3" y="778" font-size="5.5" textLength="27" lengthAdjust="spacingAndGlyphs" stroke="#0a0a0a" stroke-width="0.5">Vorrichtung</text>
<text x="1117.3" y="793" font-size="5.5" textLength="13.8" lengthAdjust="spacingAndGlyphs" stroke="#0a0a0a" stroke-width="0.5">M66-4</text>
</g>
<line x1="1042.4" y1="796" x2="1042.4" y2="801" stroke="#33e033" stroke-width="1"/>
</svg>
<!-- DRAWING END -->
<!-- DIALOG -->
<div id="dlg">
  <div class="abs" style="left:0;top:0;width:621px;height:36px;background:linear-gradient(180deg,#f5f1ea,#f4f1eb 65%,#f3f3f3)"></div>
  <svg class="abs" style="left:8px;top:5px" width="15" height="16">
    <rect x="0.5" y="0" width="13.5" height="15.5" rx="1.5" fill="#d8124a"/>
    <rect x="0.5" y="11" width="13.5" height="4.5" fill="#9c0a36"/>
    <path d="M4.2 9.5 L7.2 2.5 L10.2 9.5 M5.3 7.2 H9.1" stroke="#fff" stroke-width="1.5" fill="none"/>
  </svg>
  <div class="dt" style="left:29px;top:7px;font-size:12px;color:#111">Ansichts-Manager</div>
  <svg class="abs" style="left:599px;top:7px" width="14" height="14"><path d="M1.5 1.5 L12 12 M12 1.5 L1.5 12" stroke="#222" stroke-width="1.2"/></svg>
  <div class="dt" style="left:10px;top:40px">Aktuelle Ansicht: Aktuell</div>
  <!-- group box -->
  <div class="abs" style="left:10px;top:63px;width:597px;height:269px;border:1px solid #d6d6d6;border-radius:2px"></div>
  <div class="abs" style="left:16px;top:54px;height:14px;padding:0 3px;background:#f3f3f3"><span class="dt" style="position:static">Ansichten</span></div>
  <!-- tree -->
  <div class="abs" style="left:22px;top:75px;width:174px;height:247px;background:#fff;border:1px solid #8a8a8a"></div>
  <div class="abs" style="left:198px;top:75px;width:1px;height:248px;background:#9a9a9a"></div>
  <svg class="abs" style="left:22px;top:75px" width="174" height="100">
    <g stroke="#808080" stroke-width="1" stroke-dasharray="1,1" fill="none">
      <line x1="13.5" y1="10" x2="13.5" y2="54"/>
      <line x1="13" y1="10.5" x2="23" y2="10.5"/>
      <line x1="13" y1="26.5" x2="23" y2="26.5"/>
      <line x1="13" y1="42.5" x2="23" y2="42.5"/>
      <line x1="18" y1="58.5" x2="23" y2="58.5"/>
    </g>
    <rect x="9.5" y="54.5" width="8" height="8" fill="#f8f8f8" stroke="#8a8a8a"/>
    <path d="M11.5 58.5 H15.5 M13.5 56.5 V60.5" stroke="#333" stroke-width="1"/>
    <!-- icon 1 -->
    <circle cx="29.3" cy="8.3" r="5" fill="#ededed" stroke="#7a7a7a" stroke-width="1.3"/>
    <line x1="33.5" y1="13" x2="38.5" y2="17" stroke="#6a5e52" stroke-width="1.6"/>
    <rect x="32" y="2" width="8" height="7.3" fill="#fff" opacity="0.9"/>
    <path d="M32.5 5.0V2.5H35.0 M37.0 2.5H39.5V5.0 M39.5 6.800000000000001V9.3H37.0 M35.0 9.3H32.5V6.800000000000001" stroke="#3f86c6" stroke-width="1" fill="none"/>
    <rect x="34.5" y="4.3" width="3" height="3" fill="#4a8fd0"/>
    <!-- icon 2 -->
    <rect x="25" y="19" width="12.5" height="12.5" fill="#2e2e2e"/>
    <rect x="27.5" y="21.5" width="10" height="10" fill="#8a8a8a"/>
    <rect x="29.5" y="23.5" width="8" height="8" fill="#fff"/>
    <rect x="31.5" y="25.5" width="9" height="9" fill="#fff" opacity="0.95"/>
    <path d="M32.5 28.5V26H35.0 M37.0 26H39.5V28.5 M39.5 31.0V33.5H37.0 M35.0 33.5H32.5V31.0" stroke="#3f86c6" stroke-width="1" fill="none"/>
    <rect x="34.5" y="28.3" width="3" height="3" fill="#4a8fd0"/>
    <!-- icon 3 -->
    <rect x="24.5" y="34.5" width="13" height="13" fill="#fff" stroke="#2e2e2e" stroke-width="1.2"/>
    <path d="M26 37 L26 46.5 L33 46.5 Z" fill="#1e1e1e"/>
    <path d="M29 36.5 H36.5 V41 H29 Z M32.5 36.5 V41 M29 38.7 H36.5" stroke="#999" stroke-width="0.7" fill="none"/>
    <rect x="31.5" y="41.5" width="9" height="9" fill="#fff" opacity="0.95"/>
    <path d="M32.5 44.5V42H35.0 M37.0 42H39.5V44.5 M39.5 47.0V49.5H37.0 M35.0 49.5H32.5V47.0" stroke="#3f86c6" stroke-width="1" fill="none"/>
    <rect x="34.5" y="44.3" width="3" height="3" fill="#4a8fd0"/>
    <!-- icon 4 -->
    <path d="M24.5 53.0V50.5H27.0 M37.0 50.5H39.5V53.0 M39.5 63.0V65.5H37.0 M27.0 65.5H24.5V63.0" stroke="#3f86c6" stroke-width="1" fill="none"/>
    <path d="M27.5 55 L32 53 L36.5 55 L36.5 61 L32 63 L27.5 61 Z" fill="#cfcfcf" stroke="#9a9a9a" stroke-width="0.8"/>
    <path d="M27.5 55 L32 57 L36.5 55 M32 57 V63" stroke="#b0b0b0" stroke-width="0.6" fill="none"/>
  </svg>
  <div class="abs" style="left:65px;top:78px;width:36px;height:15px;background:#f4f6fa"></div>
  <div class="dt" style="left:67px;top:78px">Aktuell</div>
  <div class="dt" style="left:67px;top:94px">Modellansichten</div>
  <div class="dt" style="left:67px;top:110px">Layoutansichten</div>
  <div class="dt" style="left:67px;top:126px">Voreingestellte Ansichten</div>
  <!-- property grid -->
  <div class="abs" style="left:201px;top:80px;width:215px;height:19px;background:#d6d6d6"></div>
  <div class="dt" style="left:208px;top:82px;font-weight:bold;font-size:11.2px;color:#222">Ansicht</div>
  <svg class="abs" style="left:399px;top:86px" width="10" height="6"><path d="M0 0 H9 L4.5 5 Z" fill="#444"/></svg>
    <div class="abs" style="left:218px;top:99px;width:198px;height:96px;border:1px solid #d0d0d0;background:#f3f3f3"></div>
  <div class="abs" style="left:308px;top:99px;width:1px;height:95px;background:#d0d0d0"></div>
  <div class="abs" style="left:218px;top:118px;width:198px;height:1px;background:#d0d0d0"></div>
  <div class="abs" style="left:218px;top:137px;width:198px;height:1px;background:#d0d0d0"></div>
  <div class="abs" style="left:218px;top:156px;width:198px;height:1px;background:#d0d0d0"></div>
  <div class="abs" style="left:218px;top:175px;width:198px;height:1px;background:#d0d0d0"></div>
  <div class="dt" style="left:224px;top:102px;color:#555;font-size:12.3px">Mittelpunkt X</div>
  <div class="dt" style="left:224px;top:121px;color:#555;font-size:12.3px">Mittelpunkt Y</div>
  <div class="dt" style="left:224px;top:140px;color:#555;font-size:12.3px">Mittelpunkt Z</div>
  <div class="dt" style="left:224px;top:159px;color:#555;font-size:12.3px">Höhe</div>
  <div class="dt" style="left:224px;top:178px;color:#555;font-size:12.3px">Breite</div>
  <div class="dt" style="left:312px;top:102px;color:#9a9a9a">819.2009</div>
  <div class="dt" style="left:312px;top:121px;color:#9a9a9a">479.8895</div>
  <div class="dt" style="left:312px;top:140px;color:#9a9a9a">0</div>
  <div class="dt" style="left:312px;top:159px;color:#9a9a9a">1463.9682</div>
  <div class="dt" style="left:312px;top:178px;color:#9a9a9a">3066.9815</div>
  <!-- right buttons -->
  <div class="btn" style="left:444px;top:77px;width:153px">Aktuell</div>
  <div class="btn en" style="left:444px;top:106px;width:153px">Neu...</div>
  <div class="btn" style="left:444px;top:135px;width:153px">Layer aktualisieren</div>
  <div class="btn" style="left:444px;top:164px;width:153px">Umgrenzungen bearbeiten...</div>
  <div class="btn" style="left:444px;top:194px;width:153px">Löschen</div>
  <!-- bottom buttons -->
  <div class="btn en" style="left:275px;top:352px;width:73px;border:1.5px solid #2a68a8;line-height:18px">OK</div>
  <div class="btn en" style="left:362px;top:352px;width:73px">Abbrechen</div>
  <div class="btn" style="left:448px;top:352px;width:73px">Anwenden</div>
  <div class="btn en" style="left:533px;top:352px;width:73px">Hilfe</div>
</div>
</body></html>
